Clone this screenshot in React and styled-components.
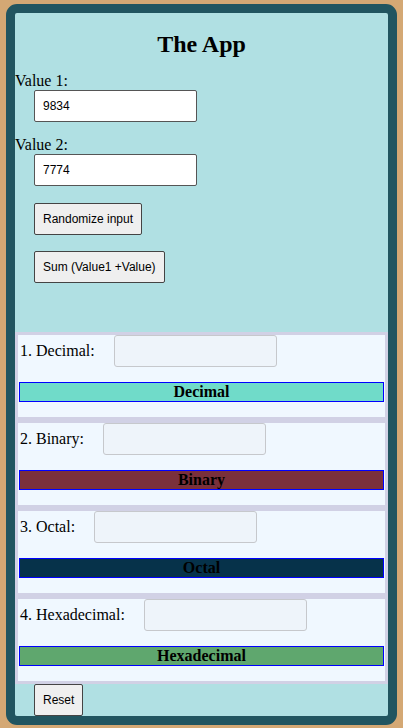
import React, { useState } from 'react'
import styled, { createGlobalStyle } from 'styled-components'

const GlobalStyle = createGlobalStyle`
  body {
    margin: 4px 6px;
    background: #d4a874;
    font-family: "Liberation Serif", "DejaVu Serif", serif;
    font-size: 16px;
    color: #000;
  }
`

const Frame = styled.div`
  border: 9px solid #215560;
  border-radius: 11px;
  background: #b0e0e3;
`

const Title = styled.h2`
  margin: 17px 0 14px;
  font-size: 24px;
  font-weight: bold;
  text-align: center;
  line-height: 28px;
`

const Field = styled.div`
  margin-bottom: 14px;
`

const FieldLabel = styled.label`
  display: block;
  line-height: 18px;
`

const TextInput = styled.input`
  box-sizing: border-box;
  display: block;
  margin-left: 19px;
  width: 163px;
  height: 32px;
  padding: 0 8px;
  border: 1px solid #555;
  border-radius: 2px;
  background: #fff;
  font-family: "Liberation Sans", Arial, sans-serif;
  font-size: 12px;
  color: #000;
`

const Button = styled.button`
  display: block;
  box-sizing: border-box;
  margin: ${p => p.$top || 0}px 0 0 19px;
  height: 32px;
  padding: 0 8px;
  border: 1px solid #444;
  border-radius: 2px;
  background: #efefef;
  font-family: "Liberation Sans", Arial, sans-serif;
  font-size: 12px;
  color: #000;
`

const Results = styled.div`
  margin-top: 49px;
`

const Section = styled.div`
  border: 3px solid #d1d1e5;
  background: #f0f8ff;
  padding: 0 1px 15px;
`

const Row = styled.div`
  display: flex;
  align-items: center;
  height: 32px;
`

const RowLabel = styled.span`
  padding-left: 1px;
`

const OutputBox = styled.input`
  box-sizing: border-box;
  margin-left: 19px;
  width: 163px;
  height: 32px;
  border: 1px solid #c6c8cc;
  border-radius: 3px;
  background: #eef4fa;
`

const Bar = styled.div`
  margin-top: 15px;
  border: 1px solid #0000ff;
  background: ${p => p.$bg};
  font-weight: bold;
  text-align: center;
  line-height: 18px;
`

const bases = [
  { n: 1, label: 'Decimal', bg: '#70dbc9' },
  { n: 2, label: 'Binary', bg: '#7a303b' },
  { n: 3, label: 'Octal', bg: '#06324a' },
  { n: 4, label: 'Hexadecimal', bg: '#5fa76e' },
]

const App = () => {
  const [v1, setV1] = useState('9834')
  const [v2, setV2] = useState('7774')

  return (
    <>
      <GlobalStyle />
      <Frame>
        <Title>The App</Title>
        <Field>
          <FieldLabel>Value 1:</FieldLabel>
          <TextInput value={v1} onChange={e => setV1(e.target.value)} />
        </Field>
        <Field>
          <FieldLabel>Value 2:</FieldLabel>
          <TextInput value={v2} onChange={e => setV2(e.target.value)} />
        </Field>
        <Button $top={17}>Randomize input</Button>
        <Button $top={16}>Sum (Value1 +Value)</Button>
        <Results>
          {bases.map(b => (
            <Section key={b.n}>
              <Row>
                <RowLabel>{b.n}. {b.label}:</RowLabel>
                <OutputBox readOnly />
              </Row>
              <Bar $bg={b.bg}>{b.label}</Bar>
            </Section>
          ))}
        </Results>
        <Button>Reset</Button>
      </Frame>
    </>
  )
}

export default App
